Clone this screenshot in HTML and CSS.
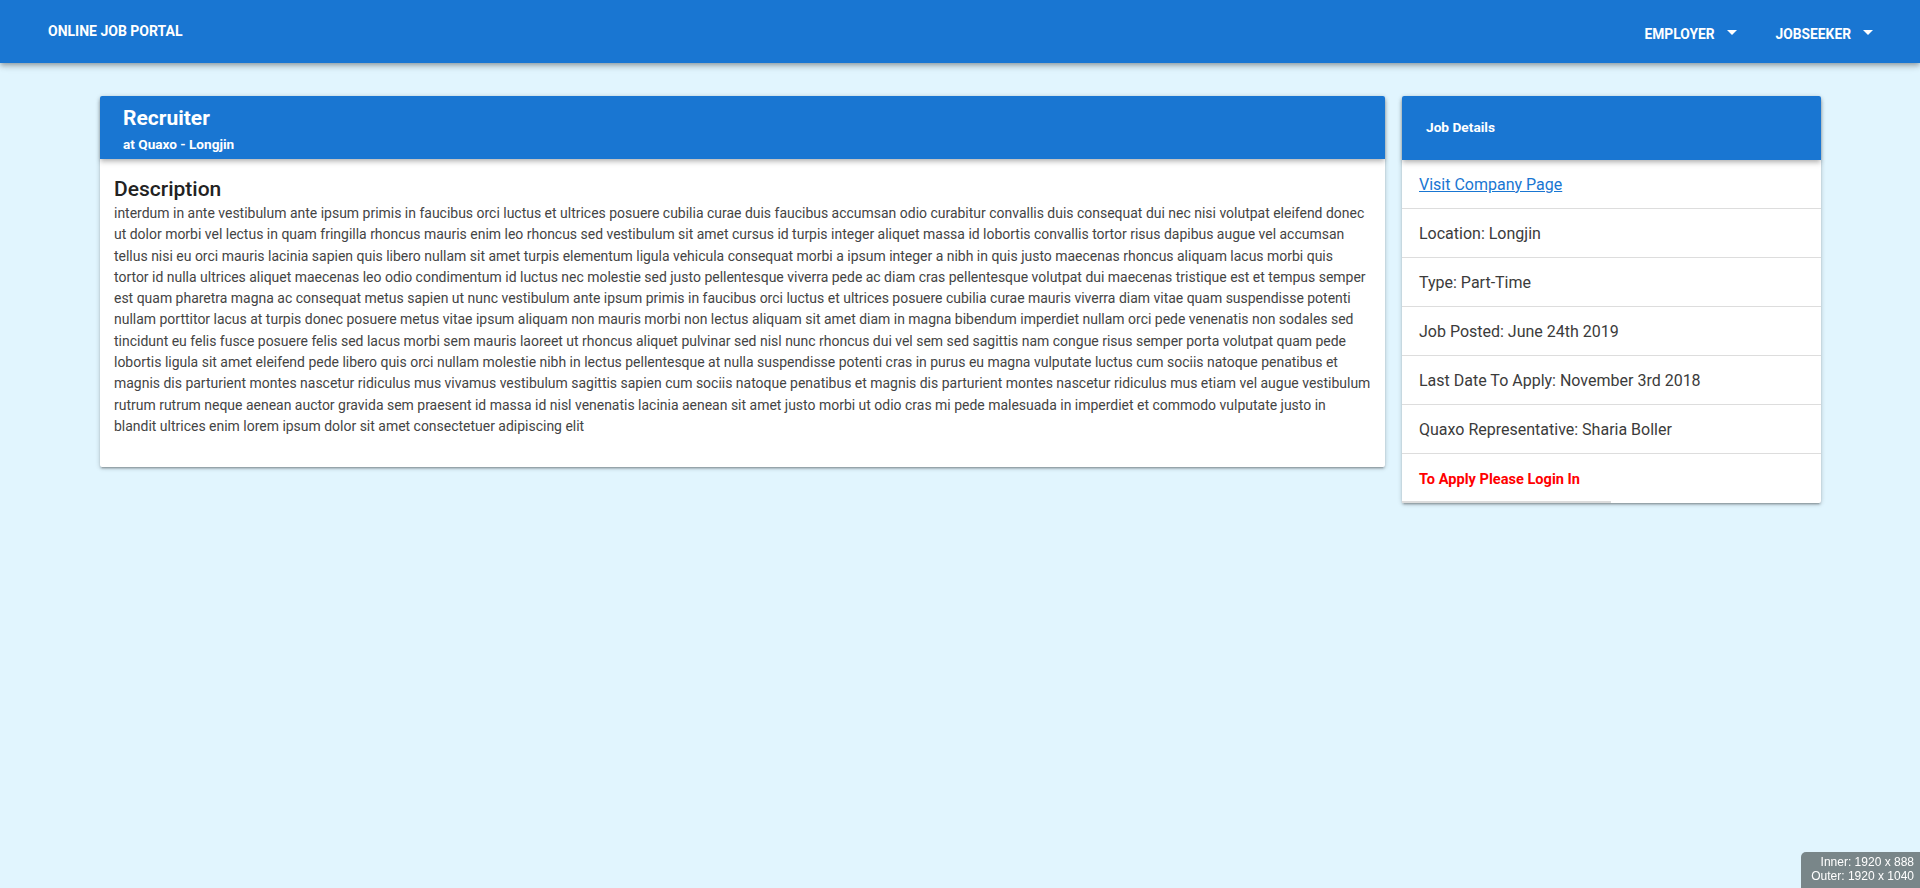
FILE: index.html
```html
<!DOCTYPE html>
<html>
<head>
<meta charset="utf-8">
<title>Online Job Portal</title>
<link rel="stylesheet" href="styles.css">
</head>
<body>
<header class="navbar">
  <div class="brand">ONLINE JOB PORTAL</div>
  <nav class="nav-links">
    <a class="nav-item">EMPLOYER<span class="caret"></span></a>
    <a class="nav-item">JOBSEEKER<span class="caret"></span></a>
  </nav>
</header>
<main class="page">
  <section class="card job-card">
    <div class="card-header job-header">
      <h1 class="job-title">Recruiter</h1>
      <div class="job-sub">at Quaxo - Longjin</div>
    </div>
    <div class="job-body">
      <h2 class="desc-title">Description</h2>
      <p class="desc-text">interdum in ante vestibulum ante ipsum primis in faucibus orci luctus et ultrices posuere cubilia curae duis faucibus accumsan odio curabitur convallis duis consequat dui nec nisi volutpat eleifend donec<br>
ut dolor morbi vel lectus in quam fringilla rhoncus mauris enim leo rhoncus sed vestibulum sit amet cursus id turpis integer aliquet massa id lobortis convallis tortor risus dapibus augue vel accumsan<br>
tellus nisi eu orci mauris lacinia sapien quis libero nullam sit amet turpis elementum ligula vehicula consequat morbi a ipsum integer a nibh in quis justo maecenas rhoncus aliquam lacus morbi quis<br>
tortor id nulla ultrices aliquet maecenas leo odio condimentum id luctus nec molestie sed justo pellentesque viverra pede ac diam cras pellentesque volutpat dui maecenas tristique est et tempus semper<br>
est quam pharetra magna ac consequat metus sapien ut nunc vestibulum ante ipsum primis in faucibus orci luctus et ultrices posuere cubilia curae mauris viverra diam vitae quam suspendisse potenti<br>
nullam porttitor lacus at turpis donec posuere metus vitae ipsum aliquam non mauris morbi non lectus aliquam sit amet diam in magna bibendum imperdiet nullam orci pede venenatis non sodales sed<br>
tincidunt eu felis fusce posuere felis sed lacus morbi sem mauris laoreet ut rhoncus aliquet pulvinar sed nisl nunc rhoncus dui vel sem sed sagittis nam congue risus semper porta volutpat quam pede<br>
lobortis ligula sit amet eleifend pede libero quis orci nullam molestie nibh in lectus pellentesque at nulla suspendisse potenti cras in purus eu magna vulputate luctus cum sociis natoque penatibus et<br>
magnis dis parturient montes nascetur ridiculus mus vivamus vestibulum sagittis sapien cum sociis natoque penatibus et magnis dis parturient montes nascetur ridiculus mus etiam vel augue vestibulum<br>
rutrum rutrum neque aenean auctor gravida sem praesent id massa id nisl venenatis lacinia aenean sit amet justo morbi ut odio cras mi pede malesuada in imperdiet et commodo vulputate justo in<br>
blandit ultrices enim lorem ipsum dolor sit amet consectetuer adipiscing elit</p>
    </div>
  </section>
  <aside class="card details-card">
    <div class="card-header details-header">Job Details</div>
    <ul class="details-list">
      <li class="details-item"><a class="company-link" href="#">Visit Company Page</a></li>
      <li class="details-item">Location: Longjin</li>
      <li class="details-item">Type: Part-Time</li>
      <li class="details-item">Job Posted: June 24th 2019</li>
      <li class="details-item">Last Date To Apply: November 3rd 2018</li>
      <li class="details-item">Quaxo Representative: Sharia Boller</li>
      <li class="details-item login-note">To Apply Please Login In</li>
    </ul>
  </aside>
</main>
<div class="size-badge">
  <div>Inner: 1920 x 888</div>
  <div>Outer: 1920 x 1040</div>
</div>
</body>
</html>
```

FILE: styles.css
```css
* { box-sizing: border-box; }
html, body { margin: 0; padding: 0; }
body {
  background: #e1f5fe;
  font-family: Roboto, "Noto Sans", Arial, sans-serif;
  color: #333;
  min-height: 888px;
}
.navbar {
  height: 63px;
  background: #1976d2;
  color: #fff;
  display: flex;
  align-items: center;
  justify-content: space-between;
  padding: 0 47px 0 48px;
  box-shadow: 0 2px 4px -1px rgba(0,0,0,0.2), 0 4px 5px 0 rgba(0,0,0,0.14), 0 1px 10px 0 rgba(0,0,0,0.12);
  position: relative;
  z-index: 2;
}
.brand {
  font-size: 14px;
  font-weight: 700;
  margin-top: -1px;
}
.nav-links {
  display: flex;
  gap: 39px;
  margin-top: 5px;
}
.nav-item {
  font-size: 13.8px;
  font-weight: 700;
  color: #fff;
  display: flex;
  align-items: center;
  cursor: pointer;
}
.caret {
  display: inline-block;
  width: 0;
  height: 0;
  margin-left: 12px;
  margin-top: -4px;
  border-left: 5px solid transparent;
  border-right: 5px solid transparent;
  border-top: 5px solid #fff;
}
.page {
  display: flex;
  align-items: flex-start;
  gap: 17px;
  padding: 33px 99px 0 100px;
}
.card {
  background: #fff;
  border-radius: 2px;
  box-shadow: 0 2px 2px 0 rgba(0,0,0,0.14), 0 3px 1px -2px rgba(0,0,0,0.12), 0 1px 5px 0 rgba(0,0,0,0.2);
}
.card-header {
  background: #1976d2;
  color: #fff;
  border-radius: 2px 2px 0 0;
  box-shadow: 0 2px 4px -1px rgba(0,0,0,0.2), 0 4px 5px 0 rgba(0,0,0,0.14);
  position: relative;
}
.job-card {
  flex: 1;
  min-height: 369px;
}
.job-header {
  height: 63px;
  padding: 10px 23px 0;
}
.job-title {
  margin: 0;
  font-size: 21px;
  font-weight: 700;
  line-height: 24px;
}
.job-sub {
  font-size: 13.6px;
  font-weight: 700;
  line-height: 18px;
  margin-top: 5px;
}
.job-body {
  padding: 18px 12px 30px 14px;
}
.desc-title {
  margin: 0;
  font-size: 21px;
  font-weight: 500;
  line-height: 24px;
  color: #222;
}
.desc-text {
  margin: 2px 0 0;
  font-size: 13.98px;
  line-height: 21.3px;
  color: #444;
}
.details-card {
  width: 419px;
  position: relative;
}
.details-header {
  height: 64px;
  display: flex;
  align-items: center;
  padding: 0 24px 2px;
  font-size: 13.7px;
  font-weight: 700;
}
.details-list {
  list-style: none;
  margin: 0;
  padding: 0;
}
.details-item {
  height: 49px;
  display: flex;
  align-items: center;
  padding: 0 17px;
  font-size: 16px;
  color: #3b3b3b;
  border-bottom: 1px solid #ddd;
}
.details-item:last-child {
  border-bottom: none;
  height: 49px;
}
.company-link {
  color: #1976d2;
  text-decoration: underline;
}
.login-note {
  color: #f00;
  font-weight: 700;
  font-size: 14.6px;
}
.details-card::after {
  content: "";
  position: absolute;
  left: 0;
  bottom: 0;
  width: 209px;
  height: 2px;
  background: #dcdcdc;
}
.size-badge {
  position: fixed;
  right: 0;
  bottom: 0;
  width: 119px;
  height: 36px;
  padding: 3px 6px 0 0;
  background: rgba(110,122,124,0.9);
  border-top-left-radius: 5px;
  color: #fff;
  font-family: "Liberation Sans", Arial, sans-serif;
  font-size: 12px;
  text-align: right;
  line-height: 14px;
}
```
